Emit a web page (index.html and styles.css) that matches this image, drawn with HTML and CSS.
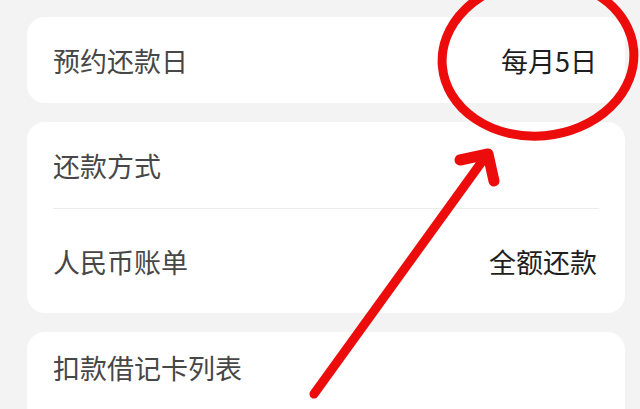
FILE: index.html
```html
<!DOCTYPE html>
<html lang="zh-CN">
<head>
<meta charset="utf-8">
<title>还款设置</title>
<link rel="stylesheet" href="styles.css">
</head>
<body>
<main class="page">
  <section class="card">
    <div class="row row-first">
      <span class="label">预约还款日</span>
      <span class="value">每月5日</span>
    </div>
  </section>
  <section class="card">
    <div class="row row-first divided">
      <span class="label">还款方式</span>
    </div>
    <div class="row row-tall">
      <span class="label">人民币账单</span>
      <span class="value">全额还款</span>
    </div>
  </section>
  <section class="card card-cut">
    <div class="row row-last">
      <span class="label">扣款借记卡列表</span>
    </div>
  </section>
</main>
<svg class="annotation" width="640" height="409" viewBox="0 0 640 409" aria-hidden="true">
  <ellipse cx="538" cy="58" rx="96" ry="78" transform="rotate(-5 538 58)" fill="none" stroke="#ec0c0c" stroke-width="9"/>
  <g fill="none" stroke="#ec0c0c" stroke-linecap="round" stroke-linejoin="round">
    <line x1="314" y1="394" x2="486" y2="156" stroke-width="9"/>
    <polyline points="460,160 488,154 494,181" stroke-width="11"/>
  </g>
</svg>
</body>
</html>
```

FILE: styles.css
```css
html, body {
  margin: 0;
  padding: 0;
  background: #f3f3f3;
  width: 640px;
  height: 409px;
  overflow: hidden;
}

body {
  position: relative;
  font-family: "Noto Sans CJK SC", "Noto Sans", sans-serif;
}

.page {
  display: flex;
  flex-direction: column;
  gap: 19px;
  padding: 17px 15px 0 27px;
}

.card {
  background: #ffffff;
  border-radius: 18px;
  padding: 0 28px 0 26px;
}

.card-cut {
  border-radius: 18px 18px 0 0;
}

.row {
  display: flex;
  align-items: center;
  justify-content: space-between;
  font-size: 27px;
  line-height: 1;
}

.row-first {
  height: 86px;
}

.row-tall {
  height: 104px;
}

.row-last {
  padding: 22px 0 28px;
}

.divided {
  border-bottom: 1px solid #ececec;
  margin-right: -2px;
}

.label {
  color: #474747;
}

.value {
  color: #1e1e1e;
}

.annotation {
  position: absolute;
  left: 0;
  top: 0;
  pointer-events: none;
}
```
